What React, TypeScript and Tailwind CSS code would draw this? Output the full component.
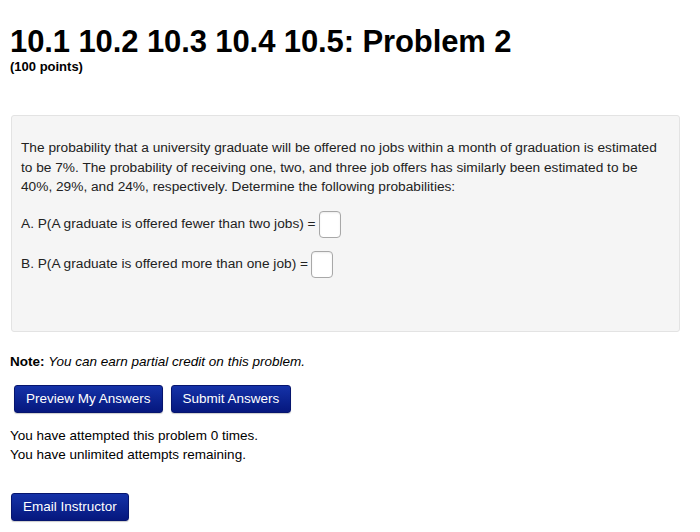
import React from 'react';

const font = { fontFamily: '"Liberation Sans", Arial, sans-serif' };

function AnswerBox() {
  return (
    <span className="inline-block align-middle w-[22px] h-[27px] rounded-[4px] border border-[#a8a8a8] bg-white shadow-[inset_0_1px_2px_rgba(0,0,0,0.08)]" />
  );
}

function NavyButton({ children }: { children: React.ReactNode }) {
  return (
    <button className="h-[28px] px-[11px] rounded-[3px] text-white text-[13.5px] bg-gradient-to-b from-[#1532a8] to-[#06177e] border border-[#06156e] shadow-[0_1px_1px_rgba(0,0,0,0.2)]">
      {children}
    </button>
  );
}

export default function App() {
  return (
    <div className="w-[700px] h-[532px] bg-white text-black overflow-hidden" style={font}>
      <div className="pt-[25px] pl-[10px]">
        <h1 className="text-[31px] font-bold leading-[34px] tracking-[-0.1px]">10.1 10.2 10.3 10.4 10.5: Problem 2</h1>
        <div className="text-[13px] font-bold leading-[16px]">(100 points)</div>
      </div>

      {/* problem box */}
      <div className="ml-[11px] mr-[20px] mt-[40px] h-[217px] bg-[#f5f5f5] border border-[#e3e3e3] rounded-[3px] pl-[9px] pr-[10px] pt-[22px]">
        <p className="text-[13.7px] leading-[19.5px] text-[#222]">
          The probability that a university graduate will be offered no jobs within a month of graduation is estimated to be 7%. The probability of receiving one, two, and three job offers has similarly been estimated to be 40%, 29%, and 24%, respectively. Determine the following probabilities:
        </p>
        <div className="mt-[14px] text-[13.7px] text-[#222] flex items-center gap-[3px]">
          <span>A. P(A graduate is offered fewer than two jobs) =</span>
          <AnswerBox />
        </div>
        <div className="mt-[13px] text-[13.7px] text-[#222] flex items-center gap-[3px]">
          <span>B. P(A graduate is offered more than one job) =</span>
          <AnswerBox />
        </div>
      </div>

      <div className="pl-[10px] mt-[22px] text-[13.5px] leading-[16px]">
        <span className="font-bold">Note:</span> <i>You can earn partial credit on this problem.</i>
      </div>

      <div className="pl-[14px] mt-[15px] flex gap-[8px]">
        <NavyButton>Preview My Answers</NavyButton>
        <NavyButton>Submit Answers</NavyButton>
      </div>

      <div className="pl-[10px] mt-[13px] text-[13.5px] leading-[19px]">
        <div>You have attempted this problem 0 times.</div>
        <div>You have unlimited attempts remaining.</div>
      </div>

      <div className="pl-[11px] mt-[29px]">
        <NavyButton>Email Instructor</NavyButton>
      </div>
    </div>
  );
}
